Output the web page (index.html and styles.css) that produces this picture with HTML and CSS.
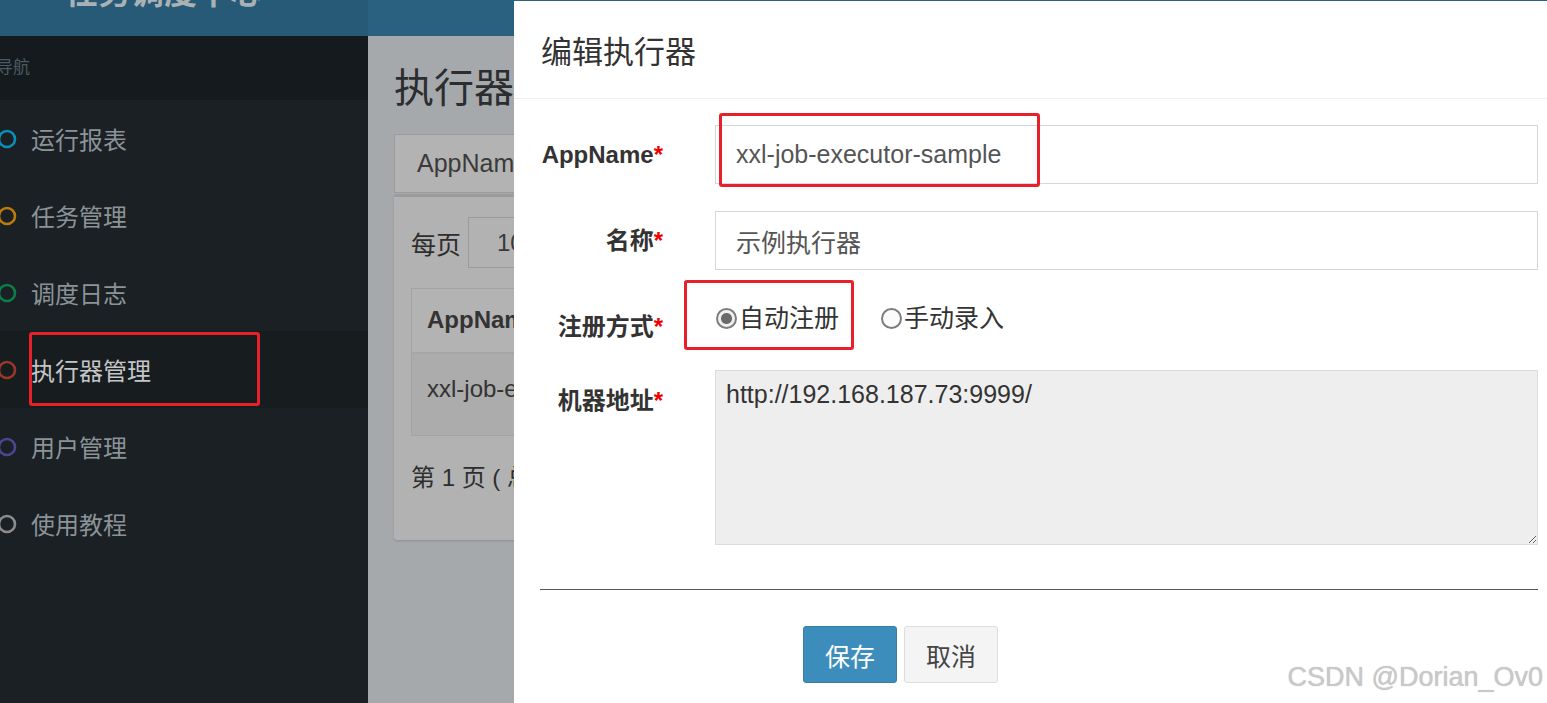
FILE: index.html
```html
<!DOCTYPE html>
<html lang="zh-CN">
<head>
<meta charset="utf-8">
<title>任务调度中心</title>
<link rel="stylesheet" href="styles.css">
</head>
<body>
<div class="page">
  <aside class="sidebar">
    <div class="logo"><span class="logo-text">任务调度中心</span></div>
    <div class="nav-header">导航</div>
    <ul class="menu">
      <li class="menu-item"><svg viewBox="0 0 20 20"><circle cx="10" cy="10" r="8" fill="none" stroke="#0b8fb8" stroke-width="2.6"/></svg><span>运行报表</span></li>
      <li class="menu-item"><svg viewBox="0 0 20 20"><circle cx="10" cy="10" r="8" fill="none" stroke="#bb7a0c" stroke-width="2.6"/></svg><span>任务管理</span></li>
      <li class="menu-item"><svg viewBox="0 0 20 20"><circle cx="10" cy="10" r="8" fill="none" stroke="#0a7d48" stroke-width="2.6"/></svg><span>调度日志</span></li>
      <li class="menu-item active"><svg viewBox="0 0 20 20"><circle cx="10" cy="10" r="8" fill="none" stroke="#9c3629" stroke-width="2.6"/></svg><span>执行器管理</span></li>
      <li class="menu-item"><svg viewBox="0 0 20 20"><circle cx="10" cy="10" r="8" fill="none" stroke="#4a4690" stroke-width="2.6"/></svg><span>用户管理</span></li>
      <li class="menu-item"><svg viewBox="0 0 20 20"><circle cx="10" cy="10" r="8" fill="none" stroke="#8c8c8c" stroke-width="2.6"/></svg><span>使用教程</span></li>
    </ul>
  </aside>
  <main class="content">
    <div class="navbar"></div>
    <div class="content-body">
      <h1 class="page-title">执行器管理</h1>
      <div class="search-box">AppName</div>
      <div class="box">
        <div class="length-row"><span>每页</span><span class="select">10</span><span>条记录</span></div>
        <table class="table">
          <thead><tr><th>AppName</th><th>名称</th><th>注册方式</th></tr></thead>
          <tbody><tr><td>xxl-job-executor-sample</td><td>示例执行器</td><td>自动注册</td></tr></tbody>
        </table>
        <div class="info">第 1 页 ( 总共 1 页，1 条记录 )</div>
      </div>
    </div>
  </main>
</div>

<div class="modal">
  <div class="modal-header"><h4 class="modal-title">编辑执行器</h4></div>
  <div class="modal-body">
    <div class="form-row row-input">
      <label class="form-label">AppName<span class="req">*</span></label>
      <input class="form-control" type="text" value="xxl-job-executor-sample" readonly>
    </div>
    <div class="form-row row-input">
      <label class="form-label">名称<span class="req">*</span></label>
      <input class="form-control" type="text" value="示例执行器" readonly>
    </div>
    <div class="form-row row-radio">
      <label class="form-label">注册方式<span class="req">*</span></label>
      <div class="radios">
        <span class="radio-opt"><span class="radio checked"></span>自动注册</span>
        <span class="radio-opt"><span class="radio"></span>手动录入</span>
      </div>
    </div>
    <div class="form-row row-area">
      <label class="form-label">机器地址<span class="req">*</span></label>
      <textarea class="form-area" readonly>http://192.168.187.73:9999/</textarea>
    </div>
    <hr class="divider">
    <div class="actions">
      <button class="btn btn-primary" type="button">保存</button>
      <button class="btn btn-default" type="button">取消</button>
    </div>
  </div>
</div>

<div class="mark mark-app"></div>
<div class="mark mark-radio"></div>
<div class="mark mark-menu"></div>
<div class="watermark">CSDN @Dorian_Ov0</div>
</body>
</html>
```

FILE: styles.css
```css
* { box-sizing: border-box; }
html, body { margin: 0; padding: 0; }
body {
  width: 1547px;
  height: 703px;
  overflow: hidden;
  position: relative;
  background: #a5a9ac;
  font-family: "Liberation Sans", "Noto Sans CJK SC", sans-serif;
  color: #333;
}

.page { display: flex; height: 703px; }

/* sidebar */
.sidebar {
  width: 368px;
  flex: none;
  background: #1a2024;
  display: flex;
  flex-direction: column;
}
.logo {
  height: 36px;
  background: #265a76;
  overflow: hidden;
  padding-left: 65px;
}
.logo-text {
  display: block;
  margin-top: -24px;
  font-size: 33px;
  line-height: 33px;
  font-weight: bold;
  color: #a9b1b5;
  white-space: nowrap;
}
.nav-header {
  height: 64px;
  background: #151a1e;
  color: #4b5a61;
  font-size: 17px;
  line-height: 64px;
  text-indent: -4px;
  overflow: hidden;
}
.menu { list-style: none; margin: 0; padding: 0; }
.menu-item {
  height: 77px;
  display: flex;
  align-items: center;
  color: #8b9397;
  font-size: 24px;
  white-space: nowrap;
}
.menu-item svg {
  width: 20px;
  height: 20px;
  margin-left: -3px;
  margin-right: 14px;
  flex: none;
}
.menu-item.active { background: #171c1f; color: #c4c6c7; }

/* main content */
.content { flex: 1; display: flex; flex-direction: column; min-width: 0; }
.navbar { height: 36px; background: #2a6080; flex: none; }
.content-body { padding-left: 26px; }
.page-title {
  margin: 0;
  padding-top: 30px;
  font-size: 40px;
  line-height: 44px;
  font-weight: normal;
  color: #2b2d2f;
  white-space: nowrap;
}
.search-box {
  margin-top: 24px;
  width: 700px;
  height: 59px;
  background: #b3b3b3;
  border: 1px solid #9c9c9c;
  padding-left: 22px;
  font-size: 25px;
  line-height: 57px;
  color: #3a3a3a;
}
.box {
  margin-top: 1px;
  width: 1100px;
  height: 346px;
  background: #b2b2b2;
  border-top: 3px solid #9a9c9e;
  border-radius: 3px;
  box-shadow: 0 1px 2px rgba(0,0,0,0.15);
  padding: 0 17px;
}
.length-row {
  margin-top: 20px;
  display: flex;
  align-items: center;
  gap: 7px;
  font-size: 25px;
  color: #2e2e2e;
  height: 51px;
}
.select {
  height: 51px;
  width: 110px;
  border: 1px solid #9a9a9a;
  padding-left: 28px;
  line-height: 49px;
  font-size: 24px;
  color: #3a3a3a;
}
.table {
  margin-top: 20px;
  width: 1000px;
  border-collapse: collapse;
  border: 1px solid #a3a3a3;
  font-size: 24px;
  color: #333;
}
.table th {
  height: 64px;
  text-align: left;
  padding-left: 15px;
  font-weight: bold;
  background: #b3b3b3;
  border-bottom: 2px solid #a6a6a6;
}
.table td {
  height: 83px;
  padding: 20px 0 0 15px;
  vertical-align: top;
  background: #acacac;
  line-height: 30px;
}
.info {
  margin-top: 27px;
  font-size: 24px;
  line-height: 30px;
  color: #2e2e2e;
  white-space: nowrap;
}

/* modal */
.modal {
  position: absolute;
  left: 514px;
  top: 1px;
  right: 0;
  bottom: 0;
  background: #fff;
}
.modal-header {
  height: 98px;
  border-bottom: 1px solid #eeeeee;
  padding-left: 27px;
  display: flex;
  align-items: center;
}
.modal-title {
  margin: 0;
  font-size: 31px;
  font-weight: normal;
  color: #333;
}
.modal-body { padding: 26px 9px 0 26px; }
.form-row {
  display: grid;
  grid-template-columns: 123px 1fr;
  column-gap: 52px;
}
.form-label {
  text-align: right;
  font-size: 24px;
  font-weight: bold;
  color: #333;
  white-space: nowrap;
  line-height: 30px;
}
.req { color: #e00; }
.row-input { align-items: center; }
.row-input + .row-input { margin-top: 27px; }
.form-control {
  height: 59px;
  width: 100%;
  border: 1px solid #d2d6de;
  background: #fff;
  padding: 0 20px;
  font-family: "Liberation Sans", "Noto Sans CJK SC", sans-serif;
  font-size: 25px;
  color: #555;
  outline: none;
}
.row-radio { margin-top: 27px; align-items: start; }
.row-radio .form-label { padding-top: 15px; }
.radios {
  padding-top: 6px;
  display: flex;
  gap: 42px;
  font-size: 25px;
  line-height: 30px;
  color: #333;
}
.radio-opt { display: flex; align-items: center; }
.radio {
  width: 21px;
  height: 21px;
  margin-left: 1px;
  margin-right: 2px;
  border-radius: 50%;
  border: 2px solid #7d7d7d;
  background: #fbfbfb;
  flex: none;
}
.radio.checked { background: radial-gradient(circle, #6a6a6a 0 5px, #f0f0f0 6px); }
.radio-opt + .radio-opt .radio { margin-left: 0; }
.row-area { margin-top: 28px; align-items: start; }
.row-area .form-label { padding-top: 16px; }
.form-area {
  display: block;
  width: 100%;
  height: 175px;
  background: #eeeeee;
  border: 1px solid #dcdcdc;
  padding: 6px 10px;
  font-family: "Liberation Sans", "Noto Sans CJK SC", sans-serif;
  font-size: 25px;
  line-height: 34px;
  color: #333;
  outline: none;
}
.divider {
  margin: 44px 0 0;
  border: 0;
  border-top: 1px solid #555;
}
.actions {
  margin-top: 36px;
  padding-left: 263px;
  display: flex;
  gap: 7px;
}
.btn {
  width: 94px;
  height: 57px;
  border-radius: 3px;
  font-family: "Liberation Sans", "Noto Sans CJK SC", sans-serif;
  font-size: 25px;
  padding: 0;
}
.btn-primary { background: #3c8dbc; border: 1px solid #367fa9; color: #fff; }
.btn-default { background: #f4f4f4; border: 1px solid #dddddd; color: #444; }

/* annotation marks */
.mark {
  position: absolute;
  border: 3px solid #e8202a;
  border-radius: 3px;
}
.mark-app { left: 719px; top: 113px; width: 321px; height: 74px; }
.mark-radio { left: 684px; top: 280px; width: 170px; height: 70px; }
.mark-menu { left: 29px; top: 332px; width: 231px; height: 74px; }

.watermark {
  position: absolute;
  right: 4px;
  top: 660px;
  font-size: 27px;
  line-height: 34px;
  color: #c9c9c9;
  text-shadow: 0 0 1px #bbb;
  white-space: nowrap;
}
```
